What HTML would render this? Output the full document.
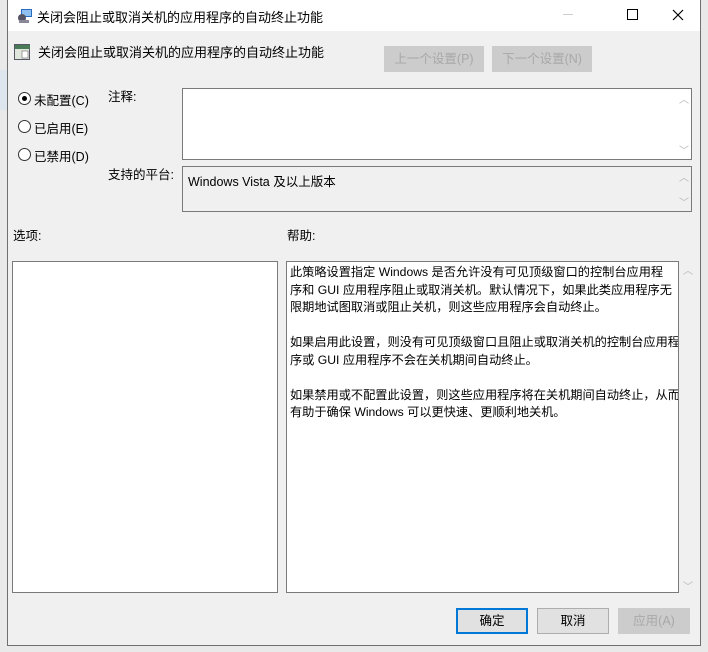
<!DOCTYPE html>
<html><head><meta charset="utf-8"><style>
*{margin:0;padding:0;box-sizing:border-box}
body{width:708px;height:652px;background:#e9e9ea;position:relative;overflow:hidden;font-family:"Liberation Sans","Microsoft YaHei","Noto Sans CJK SC",sans-serif;font-size:12.5px;color:#000}
.a{position:absolute;white-space:nowrap}
.win{position:absolute;left:7px;top:0;width:694px;height:646px;background:#f0f0f0;border:1px solid #6f6f6f;border-top:none}
.tb{position:absolute;left:0;top:0;width:692px;height:31px;background:#fff}
.btn{position:absolute;height:26px;background:#e1e1e1;border:1px solid #adadad;text-align:center;line-height:24px}
.dis{color:#a8a8a8;background:#cccccc;border-color:#cccccc}
.radio{position:absolute;width:13px;height:13px;border:1px solid #333;border-radius:50%;background:#fff}
.box{position:absolute;border:1px solid #7a7a7a;background:#fff}
.sb{position:absolute;color:#b5b5b5;font-size:10px}
</style></head><body>
<div class="a" style="left:0;top:70px;width:8px;height:40px;background:#dde6ef"></div>
<div class="win">
 <div class="tb"></div>
 <svg class="a" style="left:9px;top:8px" width="16" height="16"><rect x="4" y="1" width="11" height="8" fill="#2a6cc0"/><rect x="5" y="2" width="9" height="6" fill="#8fc0ef"/><circle cx="5" cy="10" r="4" fill="#556"/><rect x="2" y="12" width="10" height="3" fill="#889"/></svg>
 <div class="a" style="left:29px;top:7px;font-size:13px">关闭会阻止或取消关机的应用程序的自动终止功能</div>
 <div class="a" style="left:555px;top:14px;width:10px;height:1px;background:#ccc"></div>
 <div class="a" style="left:619px;top:9px;width:11px;height:11px;border:1px solid #000"></div>
 <svg class="a" style="left:664px;top:9px" width="12" height="12"><path d="M1 1L11 11M11 1L1 11" stroke="#000" stroke-width="1.2"/></svg>
 <svg class="a" style="left:6px;top:44px" width="17" height="17"><rect x="0.5" y="0.5" width="15" height="15" fill="#dfe7dc" stroke="#556"/><rect x="1" y="1" width="15" height="4" fill="#4a7a55"/><rect x="8" y="7" width="6" height="7" fill="#fff" stroke="#666" stroke-width=".6"/></svg>
 <div class="a" style="left:30px;top:42px;font-size:13px">关闭会阻止或取消关机的应用程序的自动终止功能</div>
 <div class="btn dis" style="left:376px;top:46px;width:100px">上一个设置(P)</div>
 <div class="btn dis" style="left:484px;top:46px;width:100px">下一个设置(N)</div>
 <div class="radio" style="left:10px;top:92px"><div style="position:absolute;left:3px;top:3px;width:5px;height:5px;border-radius:50%;background:#000"></div></div>
 <div class="a" style="left:26px;top:90px">未配置(C)</div>
 <div class="radio" style="left:10px;top:120px"></div>
 <div class="a" style="left:26px;top:118px">已启用(E)</div>
 <div class="radio" style="left:10px;top:148px"></div>
 <div class="a" style="left:26px;top:146px">已禁用(D)</div>
 <div class="a" style="left:100px;top:86px">注释:</div>
 <div class="box" style="left:174px;top:88px;width:510px;height:72px"><div class="sb" style="right:2px;top:2px">︿</div><div class="sb" style="right:2px;bottom:2px">﹀</div></div>
 <div class="a" style="left:100px;top:164px">支持的平台:</div>
 <div class="box" style="left:174px;top:166px;width:510px;height:46px;background:#f0f0f0"><div class="a" style="left:5px;top:4px">Windows Vista 及以上版本</div><div class="sb" style="right:2px;top:2px">︿</div><div class="sb" style="right:2px;bottom:2px">﹀</div></div>
 <div class="a" style="left:5px;top:225px">选项:</div>
 <div class="a" style="left:279px;top:225px">帮助:</div>
 <div class="box" style="left:4px;top:261px;width:266px;height:332px"></div>
 <div class="box" style="left:278px;top:261px;width:393px;height:332px;padding:2px 3px;line-height:17.5px;font-size:12.2px;white-space:nowrap;overflow:hidden">此策略设置指定 Windows 是否允许没有可见顶级窗口的控制台应用程<br>序和 GUI 应用程序阻止或取消关机。默认情况下，如果此类应用程序无<br>限期地试图取消或阻止关机，则这些应用程序会自动终止。<br><br>如果启用此设置，则没有可见顶级窗口且阻止或取消关机的控制台应用程<br>序或 GUI 应用程序不会在关机期间自动终止。<br><br>如果禁用或不配置此设置，则这些应用程序将在关机期间自动终止，从而<br>有助于确保 Windows 可以更快速、更顺利地关机。</div>
 <div class="sb" style="left:675px;top:262px">︿</div>
 <div class="sb" style="left:675px;top:578px">﹀</div>
 <div class="btn" style="left:448px;top:608px;width:72px;border:2px solid #0078d7;line-height:22px">确定</div>
 <div class="btn" style="left:529px;top:608px;width:72px">取消</div>
 <div class="btn dis" style="left:610px;top:608px;width:72px">应用(A)</div>
</div>
</body></html>
